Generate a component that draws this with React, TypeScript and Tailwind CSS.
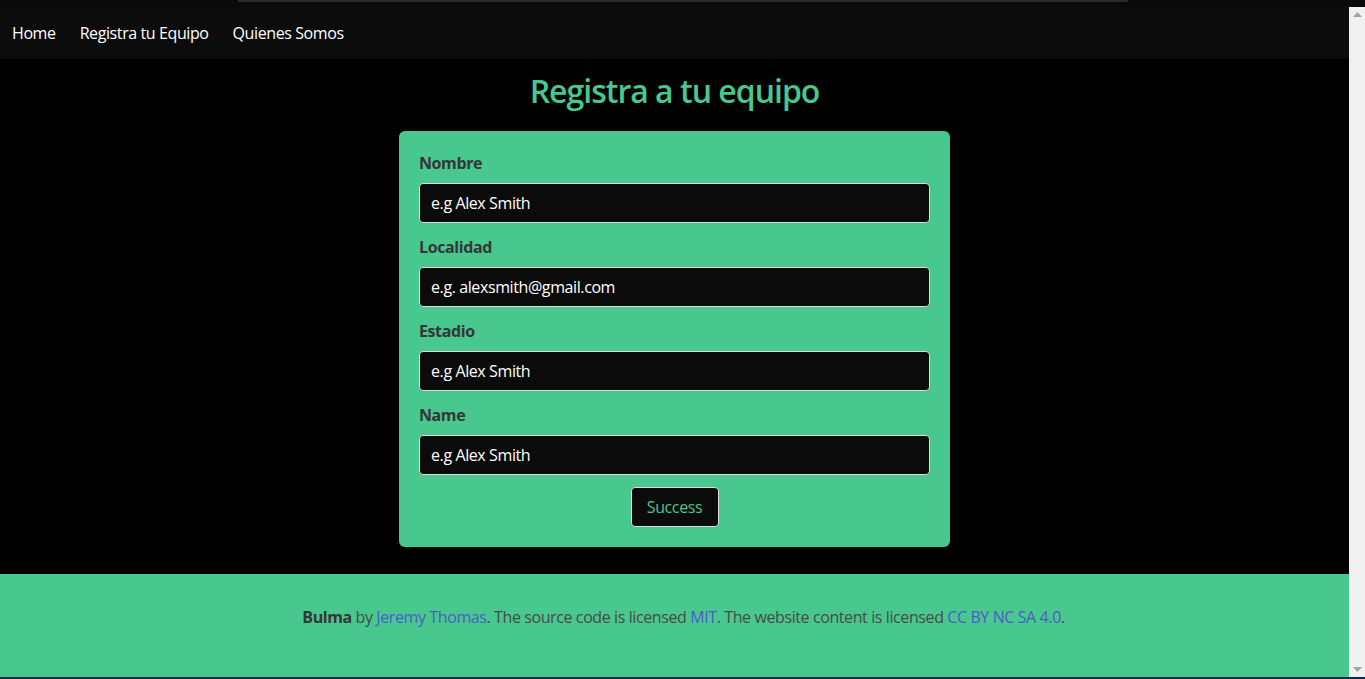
import React from "react";

const font = { fontFamily: '"Open Sans", "Noto Sans", sans-serif' };

function Field({ label, value }: { label: string; value: string }) {
  return (
    <div className="mb-3">
      <label className="block text-[16px] leading-6 font-bold text-[#363636] mb-2">{label}</label>
      <input
        readOnly
        placeholder={value}
        className="block w-full h-10 px-[11px] rounded-[4px] border border-[#dbdbdb] bg-[#0b0b0b] text-white text-[16px] tracking-[-0.4px] placeholder:text-white outline-none"
      />
    </div>
  );
}

export default function App() {
  return (
    <div className="w-[1365px] h-[679px] overflow-hidden bg-black flex flex-col tracking-[-0.4px]" style={font}>
      {/* window strip */}
      <div className="h-[7px] bg-[#0a0a0a] relative shrink-0">
        <div className="absolute left-[238px] top-0 w-[890px] h-[2px] bg-[#2a2a2a] rounded-br-[2px]" />
      </div>

      <div className="flex flex-1 min-h-0">
        <div className="flex-1 min-w-0 overflow-hidden">
          {/* Navbar */}
          <nav className="h-[52px] bg-[#0c0c0c] flex items-center">
            <a className="px-3 text-white text-[16px]">Home</a>
            <a className="px-3 text-white text-[16px]">Registra tu Equipo</a>
            <a className="px-3 text-white text-[16px]">Quienes Somos</a>
          </nav>

          {/* Title */}
          <h1 className="mt-[14px] mb-[22px] text-center text-[32px] leading-9 font-semibold tracking-[-1px] text-[#48c78e]">
            Registra a tu equipo
          </h1>

          {/* Form card */}
          <div className="mx-auto w-[551px] rounded-[6px] bg-[#48c78e] p-5">
            <Field label="Nombre" value="e.g Alex Smith" />
            <Field label="Localidad" value="e.g. alexsmith@gmail.com" />
            <Field label="Estadio" value="e.g Alex Smith" />
            <Field label="Name" value="e.g Alex Smith" />
            <div className="flex justify-center">
              <button className="h-10 w-[88px] rounded-[4px] border border-[#dbdbdb] bg-[#0b0b0b] text-[16px] tracking-[-0.4px] text-[#48c78e]">
                Success
              </button>
            </div>
          </div>

          {/* Footer */}
          <footer className="mt-[27px] bg-[#48c78e] pt-[31px] pb-24 pl-[42px] pr-6">
            <p className="text-center text-[16px] leading-6 text-[#4a4a4a]">
              <strong className="text-[#363636]">Bulma</strong> by{" "}
              <a className="text-[#485fc7]">Jeremy Thomas</a>. The source code is licensed{" "}
              <a className="text-[#485fc7]">MIT</a>. The website content is licensed{" "}
              <a className="text-[#485fc7]">CC BY NC SA 4.0</a>.
            </p>
          </footer>
        </div>

        {/* Scrollbar */}
        <div className="w-4 shrink-0 bg-[#f0f0f0] flex flex-col items-center justify-between py-[5px]">
          <svg width="9" height="5" viewBox="0 0 9 5"><path d="M4.5 0L9 5H0z" fill="#a3a3a3" /></svg>
          <svg width="9" height="5" viewBox="0 0 9 5"><path d="M0 0h9L4.5 5z" fill="#a3a3a3" /></svg>
        </div>
      </div>

      {/* taskbar strip */}
      <div className="h-[2px] shrink-0 bg-[#0b2a4a]" />
    </div>
  );
}
